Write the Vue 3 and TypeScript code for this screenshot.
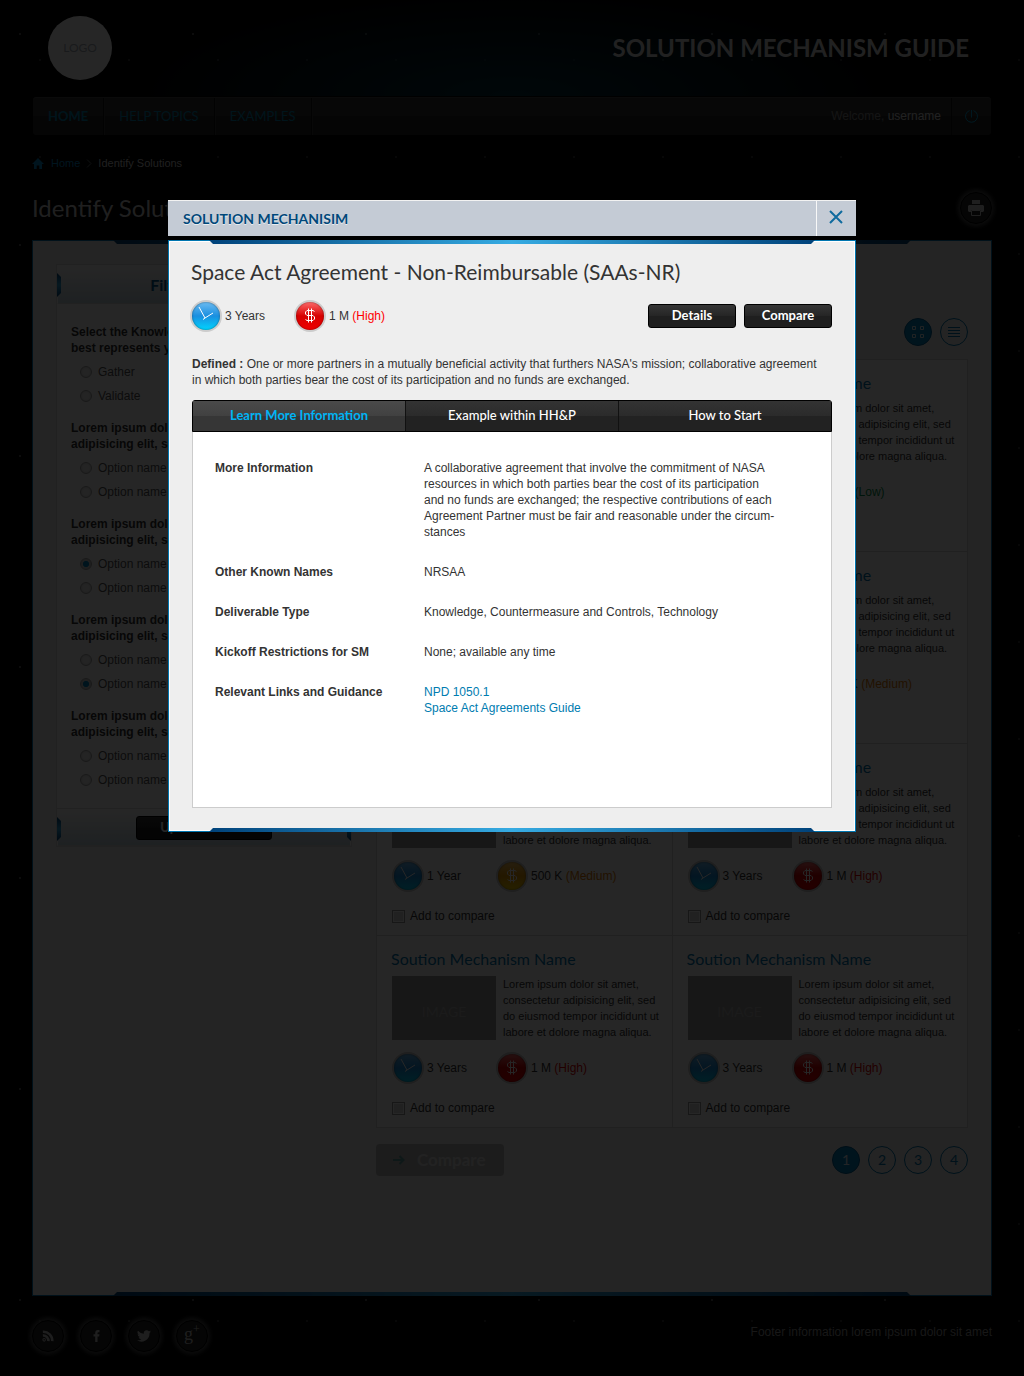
<script setup lang="ts">
import { ref } from 'vue'

type Level = 'Low' | 'Medium' | 'High'
interface Card { years: string; cost: string; level: Level }
interface Detail { term: string; text?: string; links?: string[] }

const lorem = 'Lorem ipsum dolor sit amet,\nadipisicing elit, sed do eiusmod'
const groups = ref([
  { title: 'Select the Knowledge that\nbest represents your need', options: ['Gather', 'Validate'], picked: '' },
  { title: lorem, options: ['Option name 1', 'Option name 2'], picked: '' },
  { title: lorem, options: ['Option name 1', 'Option name 2'], picked: 'Option name 1' },
  { title: lorem, options: ['Option name 1', 'Option name 2'], picked: 'Option name 2' },
  { title: lorem, options: ['Option name 1', 'Option name 2'], picked: '' },
])

const cards: Card[] = [
  { years: '1 Year', cost: '1 M', level: 'High' },
  { years: '1 Year', cost: '10 K', level: 'Low' },
  { years: '3 Years', cost: '1 M', level: 'High' },
  { years: '1 Year', cost: '500 K', level: 'Medium' },
  { years: '1 Year', cost: '500 K', level: 'Medium' },
  { years: '3 Years', cost: '1 M', level: 'High' },
  { years: '3 Years', cost: '1 M', level: 'High' },
  { years: '3 Years', cost: '1 M', level: 'High' },
]

const tabs = ['Learn More Information', 'Example within HH&P', 'How to Start']
const activeTab = ref(0)

const details: Detail[] = [
  {
    term: 'More Information',
    text: 'A collaborative agreement that involve the commitment of NASA\nresources in which both parties bear the cost of its participation\nand no funds are exchanged; the respective contributions of each\nAgreement Partner must be fair and reasonable under the circum-\nstances',
  },
  { term: 'Other Known Names', text: 'NRSAA' },
  { term: 'Deliverable Type', text: 'Knowledge, Countermeasure and Controls, Technology' },
  { term: 'Kickoff Restrictions for SM', text: 'None; available any time' },
  { term: 'Relevant Links and Guidance', links: ['NPD 1050.1', 'Space Act Agreements Guide'] },
]
</script>

<template>
  <div class="page">
    <header class="top">
      <div class="logo">LOGO</div>
      <div class="brand">SOLUTION MECHANISM GUIDE</div>
    </header>

    <nav class="nav">
      <a href="#" class="current">HOME</a>
      <a href="#">HELP TOPICS</a>
      <a href="#">EXAMPLES</a>
      <span class="welcome">Welcome, <b>username</b></span>
      <button class="power" aria-label="Log out">
        <svg width="15" height="15" viewBox="0 0 15 15" fill="none" stroke="#00a3d9">
          <path d="M5.5 1.6A6 6 0 1 0 9.500 1.600M7.500 1V8.500" />
        </svg>
      </button>
    </nav>

    <div class="crumbs">
      <svg width="12" height="11" viewBox="0 0 12 11" fill="#0085c7"><path d="M6 0L12 6H10V11H7.300V7.500H4.700V11H2V6H0Z" /></svg>
      <a href="#">Home</a>
      <svg class="chev" width="6" height="9" viewBox="0 0 6 9" fill="none" stroke="#5c6a75"><path d="M1 .5L5 4.500L1 8.500" /></svg>
      <span>Identify Solutions</span>
    </div>

    <div class="heading">
      <h1>Identify Solutions</h1>
      <button class="round" aria-label="Print">
        <svg width="16" height="16" viewBox="0 0 16 16" fill="#d0d0d0">
          <path d="M4 0H12V4H4ZM1 5H15L16 6V11L15 12H13V10H3V12H1L0 11V6Z" /><path d="M3.500 10.500H12.500V15.500H3.500Z" fill="none" stroke="#d0d0d0" />
        </svg>
      </button>
    </div>

    <main class="panel">
      <div class="bar" />
      <div class="columns">
        <form class="filter" @submit.prevent>
          <div class="filter-head">Filter Solutions</div>
          <div class="filter-body">
            <fieldset v-for="(g, gi) in groups" :key="gi">
              <legend>{{ g.title }}</legend>
              <label v-for="o in g.options" :key="o">
                <input v-model="g.picked" type="radio" :name="'group' + gi" :value="o"> {{ o }}
              </label>
            </fieldset>
          </div>
          <div class="filter-foot"><button class="dark">Update Results</button></div>
        </form>

        <section class="results">
          <div class="views">
            <button class="view on" aria-label="Grid view">
              <svg width="12" height="12" viewBox="0 0 12 12" fill="none" stroke="#d8e8f0"><path d="M.5 .5H3.500V3.500H.5ZM8.500 .5H11.500V3.500H8.500ZM.5 8.500H3.500V11.500H.5ZM8.500 8.500H11.500V11.500H8.500Z" /></svg>
            </button>
            <button class="view" aria-label="List view">
              <svg width="12" height="10" viewBox="0 0 12 10" fill="#0076b0"><path d="M0 0H12V1H0ZM0 3H12V4H0ZM0 6H12V7H0ZM0 9H12V10H0Z" /></svg>
            </button>
          </div>
          <div class="grid">
            <article v-for="(c, i) in cards" :key="i" class="card">
              <h2><a href="#">Soution Mechanism Name</a></h2>
              <div class="about">
                <div class="thumb">IMAGE</div>
                <p>Lorem ipsum dolor sit amet, consectetur adipisicing elit, sed do eiusmod tempor incididunt ut labore et dolore magna aliqua.</p>
              </div>
              <div class="stats">
                <span class="stat"><i class="orb blue"><svg width="28" height="28" viewBox="0 0 28 28"><path d="M7 5L13 16L21 11M13 16L11 17.500" /></svg></i>{{ c.years }}</span>
                <span class="stat"><i class="orb" :class="c.level"><svg width="28" height="28" viewBox="0 0 28 28"><path d="M18.500 9.500L17 8.500H11L9.500 10V12L11 13.500H17L18.500 15V17L17 18.500H11L9.500 17.500M12.500 6.500V20.500M15.500 6.500V20.500" /></svg></i><span>{{ c.cost }} <em :class="c.level">({{ c.level }})</em></span></span>
              </div>
              <label class="add"><input type="checkbox"> Add to compare</label>
            </article>
          </div>
          <div class="below">
            <button class="compare" disabled>
              <svg width="12" height="10" viewBox="0 0 12 10" fill="none" stroke="#5fa39e" stroke-width="2"><path d="M0 5H10M6.500 1L10.500 5L6.500 9" /></svg>
              Compare
            </button>
            <button v-for="n in 4" :key="n" class="view" :class="{ on: n === 1 }">{{ n }}</button>
          </div>
        </section>
      </div>
      <div class="bar bottom" />
    </main>

    <footer class="foot">
      <a href="#" class="round" aria-label="RSS"><svg width="12" height="12" viewBox="0 0 14 14" fill="none" stroke="#c8c8c8" stroke-width="3"><circle cx="2.500" cy="11.500" r=".6" /><path d="M1 6.500A6 6 0 0 1 7.500 13M1 2A10.500 10.500 0 0 1 12 13" /></svg></a>
      <a href="#" class="round" aria-label="Facebook"><svg width="7" height="12" viewBox="0 0 7 14" fill="#c8c8c8"><path d="M2 14V7.500H0V5H2V3.500Q2 0 5.200 0H7V2.500H5.800Q4.700 2.500 4.700 3.600V5H7L6.600 7.500H4.700V14Z" /></svg></a>
      <a href="#" class="round" aria-label="Twitter"><svg width="14" height="12" viewBox="0 0 24 20" fill="#c8c8c8"><path d="M24 2.400a10 10 0 0 1-2.800.8A4.900 4.900 0 0 0 23.300.5a10 10 0 0 1-3.100 1.200A4.900 4.900 0 0 0 11.800 6.200 14 14 0 0 1 1.700 1a4.900 4.900 0 0 0 1.500 6.600A4.900 4.900 0 0 1 1 7a4.900 4.900 0 0 0 3.900 4.900 5 5 0 0 1-2.200.1 4.900 4.900 0 0 0 4.600 3.400A9.900 9.900 0 0 1 0 17.400 14 14 0 0 0 21.500 5 10 10 0 0 0 24 2.400Z" /></svg></a>
      <a href="#" class="round plus" aria-label="Google Plus">g<sup>+</sup></a>
      <p>Footer information lorem ipsum dolor sit amet</p>
    </footer>

    <div class="overlay">
      <div class="modal" role="dialog" aria-modal="true" aria-labelledby="dialog-title">
        <div class="modal-head">
          <h2 id="dialog-title">SOLUTION MECHANISIM</h2>
          <button aria-label="Close">
            <svg width="14" height="14" viewBox="0 0 14 14" fill="none" stroke="#0f6b9e" stroke-width="2"><path d="M1 1L13 13M13 1L1 13" /></svg>
          </button>
        </div>
        <div class="modal-body">
          <div class="bar" />
          <div class="content">
            <h3>Space Act Agreement - Non-Reimbursable (SAAs-NR)</h3>
            <div class="row">
              <div class="stats">
                <span class="stat"><i class="orb blue"><svg width="28" height="28" viewBox="0 0 28 28"><path d="M7 5L13 16L21 11M13 16L11 17.500" /></svg></i>3 Years</span>
                <span class="stat"><i class="orb High"><svg width="28" height="28" viewBox="0 0 28 28"><path d="M18.500 9.500L17 8.500H11L9.500 10V12L11 13.500H17L18.500 15V17L17 18.500H11L9.500 17.500M12.500 6.500V20.500M15.500 6.500V20.500" /></svg></i><span>1 M <em class="High">(High)</em></span></span>
              </div>
              <button class="dark">Details</button>
              <button class="dark">Compare</button>
            </div>
            <p class="defined"><b>Defined :</b> One or more partners in a mutually beneficial activity that furthers NASA's mission; collaborative agreement in which both parties bear the cost of its participation and no funds are exchanged.</p>
            <div class="tabs" role="tablist">
              <button v-for="(t, i) in tabs" :key="t" role="tab" :aria-selected="i === activeTab" :class="{ active: i === activeTab }" @click="activeTab = i">{{ t }}</button>
            </div>
            <dl>
              <div v-for="d in details" :key="d.term">
                <dt>{{ d.term }}</dt>
                <dd>{{ d.text }}<a v-for="l in d.links" :key="l" href="#">{{ l }}</a></dd>
              </div>
            </dl>
          </div>
          <div class="bar bottom" />
        </div>
      </div>
    </div>
  </div>
</template>

<style>
body { margin: 0; background: #000; }
</style>

<style scoped>
* { box-sizing: border-box; }
h1, h2, h3, p, dl, dd, fieldset { margin: 0; padding: 0; border: 0; font-weight: 400; }
a { text-decoration: none; color: inherit; }
button { padding: 0; border: 0; background: none; font: inherit; color: inherit; cursor: pointer; }
em, i { font-style: normal; }
svg { display: block; }

.page {
  position: relative;
  padding: 0 32px;
  font: 12px/16px "Liberation Sans", Arial, sans-serif;
  color: #333;
  background:
    radial-gradient(ellipse 400px 110px at 50% 96px, #00303f, transparent) 0 0 / 100% 96px no-repeat,
    radial-gradient(circle at 20px 34px, #555 1px, transparent 1px) 0 0 / 173px 211px,
    radial-gradient(circle at 90px 120px, #444 1px, transparent 1px) 0 0 / 127px 167px,
    radial-gradient(circle at 40px 60px, #333 1px, transparent 1px) 0 0 / 89px 97px,
    #000;
}
.logo, .brand, .nav a, h1, h2, h3, .filter-head, .dark, .compare, .view, .thumb, .tabs { font-family: Lato, sans-serif; }

.top { display: flex; align-items: center; justify-content: space-between; height: 97px; padding: 0 23px 1px 16px; }
.logo { width: 64px; height: 64px; border-radius: 50%; background: #fff; color: #a8b0ba; font-size: 12px; line-height: 64px; text-align: center; }
.brand { font-size: 24px; line-height: 32px; font-weight: 700; color: #ddd; }

.nav { display: flex; height: 38px; margin: 0 1px; border-top: 1px solid #444; border-radius: 3px; background: linear-gradient(#333 50%, #262626 50%); line-height: 36px; color: #888; }
.nav a { padding: 0 15px; border-right: 1px solid #111; box-shadow: 1px 0 #383838; font-size: 13px; color: #0087b4; }
.nav .current { font-weight: 700; }
.welcome { margin-left: auto; padding-right: 10px; }
.welcome b { font-weight: 400; color: #ddd; }
.power { display: grid; place-items: center; width: 40px; border-left: 1px solid #111; }

.crumbs { display: flex; align-items: center; height: 56px; font-size: 11px; color: #ccc; }
.crumbs a { margin-left: 7px; color: #0085c7; }
.chev { margin: 0 6px; }
.heading { display: flex; align-items: center; justify-content: space-between; height: 33px; }
h1 { font-size: 24px; line-height: 32px; color: #ccc; }
.round { display: grid; place-items: center; width: 32px; height: 32px; border: 1px solid #000; border-radius: 50%; background: #222; box-shadow: 0 0 5px 2px #555; color: #c8c8c8; }

.panel { margin-top: 16px; border: 1px solid #0076b0; background: #eee; }
.bar { height: 4px; margin: -1px 40px 0; background: linear-gradient(90deg, #00427a, #36abe2 50%, #00427a); clip-path: polygon(0 0, 100% 0, calc(100% - 4px) 100%, 4px 100%); }
.bar.bottom { margin: 0 40px -1px; clip-path: polygon(4px 0, calc(100% - 4px) 0, 100% 100%, 0 100%); }
.panel > .bar { margin-left: 80px; margin-right: 80px; }
.columns { display: flex; align-items: flex-start; gap: 24px; min-height: 1048px; padding: 20px 23px 0; }

.filter { width: 296px; border: 1px solid #ddd; background: #fafafa; }
.filter-head, .filter-foot { position: relative; display: grid; place-items: center; height: 39px; border: 1px solid #fff; border-bottom-color: #ddd; background: linear-gradient(#fff, #c8dae3); }
.filter-foot { height: 37px; }
.filter-head { font-size: 16px; font-weight: 700; color: #005a8c; }
.filter-head::before, .filter-foot::before, .filter-head::after, .filter-foot::after {
  content: ""; position: absolute; top: 7px; left: -1px; width: 4px; height: 24px;
  background: linear-gradient(#00427a, #2fa5dc, #00427a); clip-path: polygon(0 0, 100% 4px, 100% 20px, 0 100%);
}
.filter-head::after, .filter-foot::after { left: auto; right: -1px; transform: scaleX(-1); }
.filter-body { display: flex; flex-direction: column; gap: 16px; padding: 20px 14px; border-bottom: 1px solid #ddd; background: #fff; }
legend { padding: 0 0 4px; font-weight: 700; white-space: pre-line; }
.filter-body label { display: flex; align-items: center; gap: 6px; height: 24px; padding-left: 9px; color: #555; }
.filter-body label + label { margin-bottom: -4px; }
input { appearance: none; margin: 0; flex: none; }
input[type="radio"] { width: 12px; height: 12px; border: 1px solid #aaa; border-radius: 50%; background: radial-gradient(#eee 45%, #ccc); }
input[type="radio"]:checked { background: radial-gradient(#0086c4 40%, #ccc 45%); }

.dark { width: 88px; height: 24px; padding-bottom: 2px; border: 1px solid #000; border-radius: 3px; background: linear-gradient(#363636, #252525 50%, #1f1f1f 50%); color: #fff; font-size: 13px; font-weight: 700; line-height: 20px; }
.filter-foot .dark { width: 136px; }

.results { flex: 1; min-width: 0; }
.views { display: flex; justify-content: flex-end; gap: 8px; padding: 54px 0 13px; }
.view { display: grid; place-items: center; width: 28px; height: 28px; border: 1px solid #0076b0; border-radius: 50%; font-size: 14px; color: #0076b0; }
.view.on { background: #0086c4; border-color: #005f95; color: #e4f2fa; }
.grid { display: grid; grid-template-columns: 1fr 1fr; border: solid #d8d8d8; border-width: 1px 0 0 1px; background: #fff; }
.card { height: 192px; padding: 14px 8px 0 14px; border: solid #d8d8d8; border-width: 0 1px 1px 0; }
.card h2 { font-size: 16px; line-height: 17px; color: #0076b0; }
.about { display: flex; gap: 7px; padding: 9px 0 0 1px; font-size: 11px; }
.thumb { flex: none; width: 104px; height: 64px; background: #999; color: #b4b4b4; font-size: 14px; line-height: 72px; text-align: center; }
.stats { display: flex; padding: 12px 0 0 1px; }
.stat { display: flex; align-items: center; gap: 3px; width: 104px; white-space: nowrap; }
.orb { width: 32px; height: 32px; border: 2px solid #ccc; border-radius: 50%; }
.orb svg { fill: none; stroke: #fff; border-radius: 50%; box-shadow: inset 0 0 2px rgba(0, 0, 0, .5); }
.blue { background: linear-gradient(#6cbcf2, #1a8fe0 50%, #00d5ff); }
.orb.High { background: linear-gradient(#ff6a6a, #d60000 50%, #f00000); }
.orb.Medium { background: linear-gradient(#ffc861, #eb9c00 50%, #ffd800); }
.orb.Low { background: linear-gradient(#6fdc9a, #009c4a 50%, #00d060); }
em.High { color: #e00000; }
em.Medium { color: #e07800; }
em.Low { color: #00904a; }
.add { display: flex; align-items: center; gap: 5px; padding: 16px 0 0 1px; }
.add input { width: 13px; height: 13px; border: 1px solid #999; background: #ddd; box-shadow: inset 0 0 0 1px #fff; }
.below { display: flex; align-items: center; gap: 8px; padding-top: 16px; }
.compare { display: flex; align-items: center; gap: 12px; width: 128px; height: 32px; margin-right: auto; padding-left: 17px; border-radius: 4px; background: #bbb; color: #e4e4e4; font-size: 17px; font-weight: 700; }

.foot { display: flex; gap: 16px; height: 80px; padding-top: 24px; color: #999; }
.plus { display: block; font: 18px/26px "Liberation Serif", serif; text-align: center; }
.plus sup { font-size: 12px; line-height: 1px; }
.foot p { margin-left: auto; padding-top: 4px; }

.overlay { position: absolute; inset: 0; display: flex; align-items: flex-start; justify-content: center; padding-top: 200px; background: rgba(0, 0, 0, .85); }
.modal { width: 100%; max-width: 688px; background: #000; }
.modal-head { display: flex; justify-content: space-between; height: 36px; margin-bottom: 4px; border-top: 1px solid #f2f2f2; background: #c4cbd5; }
.modal-head h2 { padding-left: 15px; font-size: 14px; line-height: 36px; font-weight: 700; color: #00487a; text-shadow: 0 1px #e8ecf0; }
.modal-head button { display: grid; place-items: center; width: 40px; padding: 0 2px 4px 0; border-left: 1px solid #f8f8f8; }
.modal-body { border: 1px solid #0076b0; background: #eee; box-shadow: inset 0 0 0 1px #fff; }
.content { padding: 15px 23px 20px; }
h3 { font-size: 21px; line-height: 26px; margin-left: -1px; }
.row { display: flex; align-items: center; gap: 8px; padding-top: 15px; }
.row .stats { margin: 0 auto 0 -2px; }
.content .stats { padding: 0; }
.content em.High { color: #f00; }
.defined { padding: 24px 8px 12px 0; }
.tabs { display: flex; height: 32px; border: 1px solid #000; border-radius: 3px 3px 0 0; background: #222; color: #fff; font-size: 13px; font-weight: 500; }
.tabs button { flex: 1; padding-bottom: 2px; border-right: 1px solid #111; background: linear-gradient(#333, #2b2b2b 50%, #222 50%); }
.tabs button:last-child { border-right: 0; }
.tabs .active { background: linear-gradient(#4a4a4a, #414141 50%, #363636 50%); color: #00b4f5; font-weight: 700; }
dl { display: flex; flex-direction: column; gap: 24px; min-height: 376px; padding: 28px 22px; border: 1px solid #ccc; border-top: 0; background: #fff; }
dl div { display: flex; }
dt { flex: none; width: 209px; font-weight: 700; }
dd { white-space: pre-line; }
dd a { display: block; color: #007cb0; }
</style>
